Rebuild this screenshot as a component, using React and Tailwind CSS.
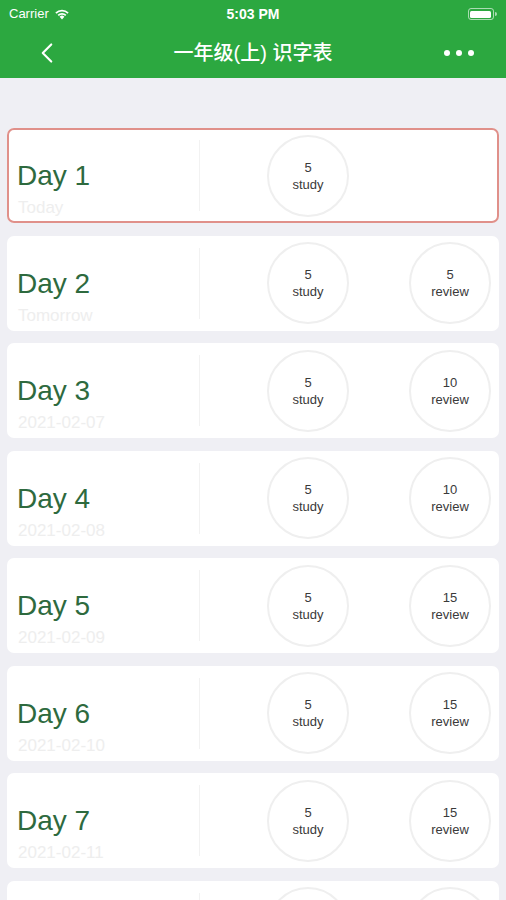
import { ChevronLeft } from 'lucide-react'

const DAYS = [
  { day: 'Day 1', sub: 'Today', study: 5, review: null, active: true },
  { day: 'Day 2', sub: 'Tomorrow', study: 5, review: 5 },
  { day: 'Day 3', sub: '2021-02-07', study: 5, review: 10 },
  { day: 'Day 4', sub: '2021-02-08', study: 5, review: 10 },
  { day: 'Day 5', sub: '2021-02-09', study: 5, review: 15 },
  { day: 'Day 6', sub: '2021-02-10', study: 5, review: 15 },
  { day: 'Day 7', sub: '2021-02-11', study: 5, review: 15 },
  { day: 'Day 8', sub: '2021-02-12', study: 5, review: 15 },
]

function Circle({ n, label }) {
  return (
    <div className="w-[82px] h-[82px] rounded-full border-2 border-[#efefef] flex flex-col items-center justify-center text-[#3a3a3a] text-[13px] leading-[17px]">
      <span>{n}</span>
      <span>{label}</span>
    </div>
  )
}

function StatusBar() {
  return (
    <div className="h-[28px] flex items-center justify-between px-[9px] text-white text-[13px]">
      <div className="flex items-center gap-[5px] w-[120px]">
        <span>Carrier</span>
        <svg width="16" height="12" viewBox="0 0 16 12">
          <path d="M8 11.5 L5.6 8.8 A3.4 3.4 0 0 1 10.4 8.8 Z" fill="white" />
          <path d="M3.6 6.8 A6.2 6.2 0 0 1 12.4 6.8 L11.2 8 A4.5 4.5 0 0 0 4.8 8 Z" fill="white" />
          <path d="M1.3 4.5 A9.5 9.5 0 0 1 14.7 4.5 L13.5 5.7 A7.8 7.8 0 0 0 2.5 5.7 Z" fill="white" />
        </svg>
      </div>
      <span className="font-semibold text-[14px]">5:03 PM</span>
      <div className="w-[120px] flex justify-end items-center">
        <div className="w-[26px] h-[12px] rounded-[3px] border border-white/60 p-[1.5px]">
          <div className="w-full h-full bg-white rounded-[1.5px]" />
        </div>
        <div className="w-[2px] h-[4px] bg-white/60 rounded-r-sm ml-[1px]" />
      </div>
    </div>
  )
}

export default function App() {
  return (
    <div className="w-[506px] h-[900px] overflow-hidden bg-[#efeff4]" style={{ fontFamily: '"Liberation Sans", "Noto Sans CJK SC", sans-serif' }}>
      {/* Header */}
      <div className="bg-[#2ca840]">
        <StatusBar />
        <div className="h-[50px] flex items-center justify-between px-[30px]">
          <ChevronLeft className="w-[34px] h-[34px] text-white" strokeWidth={1.5} />
          <span className="text-white text-[20px] font-medium">一年级(上) 识字表</span>
          <div className="flex gap-[6px] items-center w-[34px] justify-end pr-[2px]">
            <span className="w-[6px] h-[6px] rounded-full bg-white" />
            <span className="w-[6px] h-[6px] rounded-full bg-white" />
            <span className="w-[6px] h-[6px] rounded-full bg-white" />
          </div>
        </div>
      </div>

      {/* List */}
      <div className="flex flex-col gap-[12.5px] px-[7px] pt-[50px]">
        {DAYS.map(d => (
          <div
            key={d.day}
            className={`h-[95px] shrink-0 rounded-[7px] bg-white flex items-center ${d.active ? 'ring-2 ring-inset ring-[#e0908a]' : ''}`}
          >
            <div className="w-[193px] h-[71px] border-r border-[#f2f2f2] relative">
              <span className="text-[#2e6a3e] text-[28px] leading-[32px] absolute left-[10px] top-[20px]">{d.day}</span>
              <span className="text-[#eeeeee] text-[17px] leading-[20px] absolute left-[11px] top-[58px]">{d.sub}</span>
            </div>
            <div className="flex-1 flex items-center justify-between pl-[67px] pr-[8px]">
              <Circle n={d.study} label="study" />
              {d.review !== null ? <Circle n={d.review} label="review" /> : <div className="w-[82px]" />}
            </div>
          </div>
        ))}
      </div>
    </div>
  )
}
